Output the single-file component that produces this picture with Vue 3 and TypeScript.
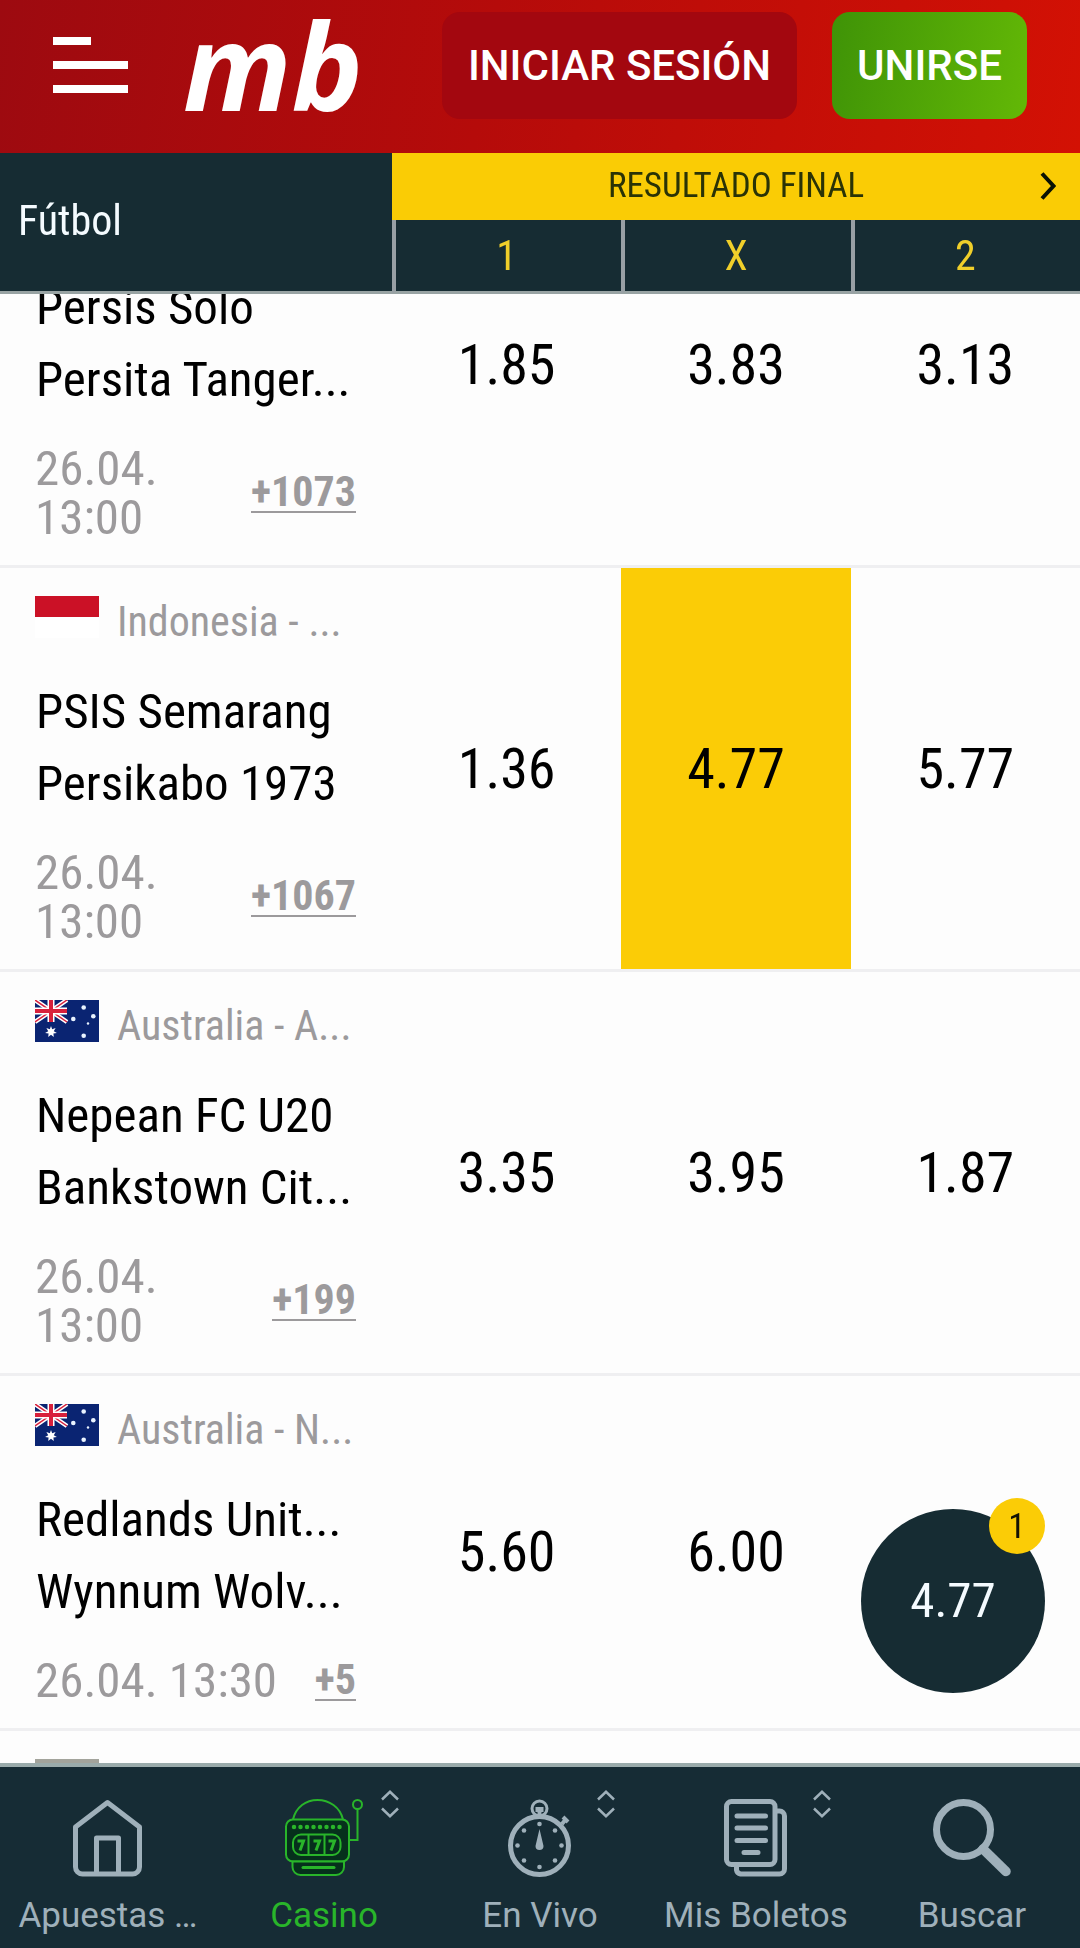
<script setup lang="ts">
import { onMounted, ref } from 'vue'

type Flag = 'id' | 'au' | 'plain'

interface Match {
  id: number
  flag: Flag
  league?: string
  home?: string
  away?: string
  date?: string
  time?: string
  more?: string
  odds: string[]
  selected?: number
}

interface NavItem {
  icon: string
  label: string
  expandable: boolean
}

const columns = ['1', 'X', '2']

const matches: Match[] = [
  { id: 1, flag: 'id', home: 'Persis Solo', away: 'Persita Tanger...', date: '26.04.', time: '13:00', more: '+1073', odds: ['1.85', '3.83', '3.13'] },
  { id: 2, flag: 'id', league: 'Indonesia - ...', home: 'PSIS Semarang', away: 'Persikabo 1973', date: '26.04.', time: '13:00', more: '+1067', odds: ['1.36', '4.77', '5.77'], selected: 1 },
  { id: 3, flag: 'au', league: 'Australia - A...', home: 'Nepean FC U20', away: 'Bankstown Cit...', date: '26.04.', time: '13:00', more: '+199', odds: ['3.35', '3.95', '1.87'] },
  { id: 4, flag: 'au', league: 'Australia - N...', home: 'Redlands Unit...', away: 'Wynnum Wolv...', date: '26.04.', time: '13:30', more: '+5', odds: ['5.60', '6.00', ''] },
  { id: 5, flag: 'plain', odds: ['', '', ''] },
]

const nav: NavItem[] = [
  { icon: 'home', label: 'Apuestas …', expandable: false },
  { icon: 'casino', label: 'Casino', expandable: true },
  { icon: 'live', label: 'En Vivo', expandable: true },
  { icon: 'slips', label: 'Mis Boletos', expandable: true },
  { icon: 'search', label: 'Buscar', expandable: false },
]

const active = ref('casino')
const list = ref<HTMLElement | null>(null)

onMounted(() => {
  if (list.value) list.value.scrollTop = 130
})
</script>

<template>
  <div class="app">
    <header class="topbar">
      <button class="menu" type="button" aria-label="Menú">
        <span class="bar short"></span>
        <span class="bar"></span>
        <span class="bar"></span>
      </button>
      <a class="logo" href="#">mb</a>
      <button class="login" type="button">INICIAR SESIÓN</button>
      <button class="join" type="button">UNIRSE</button>
    </header>

    <main ref="list" class="list">
      <table class="odds">
        <colgroup>
          <col class="col-match" />
          <col v-for="c in columns" :key="c" />
        </colgroup>
        <thead>
          <tr>
            <th class="sport" rowspan="2" scope="col">Fútbol</th>
            <th class="market" colspan="3" scope="colgroup">
              <div class="market-inner">
                <span class="market-name">RESULTADO FINAL</span>
                <button class="next" type="button" aria-label="Siguiente mercado">
                  <svg viewBox="0 0 16 28" width="16" height="28" fill="none" stroke="#0a1204" stroke-width="4"><path d="M2 1.500 13.500 14 2 26.500" /></svg>
                </button>
              </div>
            </th>
          </tr>
          <tr>
            <th v-for="c in columns" :key="c" class="pick" scope="col">{{ c }}</th>
          </tr>
        </thead>
        <tbody>
          <tr v-for="m in matches" :key="m.id">
            <td class="match">
              <div class="league">
                <svg v-if="m.flag === 'au'" class="flag" viewBox="0 0 64 42">
                  <rect width="64" height="42" fill="#0a2472" />
                  <path d="M0 0 32 22M32 0 0 22" stroke="#fff" stroke-width="4.500" />
                  <path d="M0 0 32 22M32 0 0 22" stroke="#d8203c" stroke-width="1.500" />
                  <path d="M16 0V22M0 11H32" stroke="#fff" stroke-width="7" />
                  <path d="M16 0V22M0 11H32" stroke="#d8203c" stroke-width="4" />
                  <path fill="#fff" d="M16 26l1.200 3.300 3.400-1.200-1.800 3.100 3.100 1.700-3.500.6.400 3.500L16 34.800 13.200 37l.4-3.500-3.500-.6 3.100-1.700-1.800-3.100 3.400 1.200z" />
                  <g fill="#e9f3ff">
                    <circle cx="48.700" cy="7.500" r="2.300" />
                    <circle cx="38.300" cy="19" r="2.300" />
                    <circle cx="58.300" cy="16.300" r="2.300" />
                    <circle cx="48.700" cy="35.800" r="2.300" />
                    <circle cx="53" cy="23.500" r="1.200" />
                  </g>
                </svg>
                <svg v-else-if="m.flag === 'id'" class="flag" viewBox="0 0 64 42">
                  <rect width="64" height="42" fill="#fff" />
                  <rect width="64" height="21" fill="#cb1126" />
                </svg>
                <span v-else class="flag plain"></span>
                <span v-if="m.league" class="league-name">{{ m.league }}</span>
              </div>
              <template v-if="m.home">
                <div class="team">{{ m.home }}</div>
                <div class="team">{{ m.away }}</div>
                <div class="meta">
                  <span class="when">{{ m.date }} {{ m.time }}</span>
                  <a class="more" href="#">{{ m.more }}</a>
                </div>
              </template>
            </td>
            <td v-for="(o, i) in m.odds" :key="i" class="cell" :class="{ selected: m.selected === i }">
              <button v-if="o" class="odd" type="button">{{ o }}</button>
            </td>
          </tr>
        </tbody>
      </table>
    </main>

    <button class="slip" type="button">
      4.77
      <span class="badge">1</span>
    </button>

    <nav class="tabs">
      <a v-for="n in nav" :key="n.icon" class="tab" :class="{ active: active === n.icon }" href="#" @click.prevent="active = n.icon">
        <svg v-if="n.icon === 'home'" class="icon" viewBox="0 0 78 78" fill="none" stroke="currentColor" stroke-width="5" stroke-linejoin="round">
          <path d="M38.500 3.500 70.500 28V68a7 7 0 0 1-7 7H13.500a7 7 0 0 1-7-7V28zM27.500 75V39H49.500V75" />
        </svg>
        <svg v-else-if="n.icon === 'casino'" class="icon" viewBox="0 0 78 78" fill="none" stroke="currentColor" stroke-width="2">
          <path d="M8 20.500C11 8 21 1 32.500 1S55 8 58 20.500" />
          <rect x="1" y="20.500" width="63" height="42" rx="7" fill="#06301c" />
          <path d="M7.500 62.500V68a8 8 0 0 0 8 8H51a8 8 0 0 0 8-8v-5.500z" fill="#06301c" />
          <path d="M18 68.500H49" stroke-width="3" stroke-linecap="round" />
          <path d="M9 28H57" stroke-width="4.500" stroke-dasharray="0 6.500" stroke-linecap="round" />
          <rect x="8" y="35.500" width="47.500" height="20.500" rx="8" />
          <path d="M23.500 35.500V56M39.500 35.500V56M64 41H72.500V10" />
          <path d="M12.500 42H18.500L15 51.500M28.500 42H34.500L31 51.500M43.500 42H49.500L46 51.500" stroke-width="3" />
          <circle cx="72.500" cy="5.500" r="4.500" />
        </svg>
        <svg v-else-if="n.icon === 'live'" class="icon" viewBox="0 0 78 78" fill="none" stroke="currentColor">
          <circle cx="38.500" cy="46.500" r="29" stroke-width="5" />
          <circle cx="38.500" cy="9.500" r="7.500" stroke-width="3" />
          <path d="M34.500 8h8v5h-2v5h-4v-5h-2zM38.500 30l4 17a4 4 0 1 1-8 0z" fill="currentColor" stroke="none" />
          <path d="M61 25l4-5M62 18l5 5" stroke-width="4" />
          <g fill="currentColor" stroke="none">
            <circle cx="38.500" cy="25" r="2.300" /><circle cx="54" cy="31.500" r="2.300" /><circle cx="60.500" cy="46.500" r="2.300" /><circle cx="54" cy="61.500" r="2.300" />
            <circle cx="38.500" cy="68" r="2.300" /><circle cx="23" cy="61.500" r="2.300" /><circle cx="16.500" cy="46.500" r="2.300" /><circle cx="23" cy="31.500" r="2.300" />
          </g>
        </svg>
        <svg v-else-if="n.icon === 'slips'" class="icon" viewBox="0 0 78 78" fill="none" stroke="currentColor" stroke-width="5">
          <rect x="9.500" y="2.500" width="48.500" height="63" rx="5" />
          <path d="M58 12H62.500a5 5 0 0 1 5 5V70a5 5 0 0 1-5 5H23.500a5 5 0 0 1-4-4V66" />
          <path d="M20 17H48.500M20 29H48.500M20 41.500H48.500M27 53.500H41" stroke-linecap="round" />
        </svg>
        <svg v-else class="icon" viewBox="0 0 78 78" fill="none" stroke="currentColor">
          <circle cx="30.500" cy="30.500" r="27" stroke-width="7" />
          <path d="M50 50 73 72.500" stroke-width="9.500" stroke-linecap="round" />
        </svg>
        <span class="tab-label">{{ n.label }}</span>
        <svg v-if="n.expandable" class="expand" viewBox="0 0 18 28" fill="none" stroke="#9fb0ba" stroke-width="2.500"><path d="M1 9.500 9 1.800 17 9.500M1 18.500 9 26.200 17 18.500" /></svg>
      </a>
    </nav>
  </div>
</template>

<style>
body {
  background: #fdfdfd;
}
</style>

<style scoped>
.app {
  position: relative;
  display: flex;
  flex-direction: column;
  height: 100vh;
  overflow: hidden;
  font-family: "Roboto Condensed", "Liberation Sans Narrow", Roboto, sans-serif;
  color: #000;
}

button {
  border: 0;
  padding: 0;
  background: none;
  font: inherit;
  color: inherit;
  cursor: pointer;
}

a {
  color: inherit;
  text-decoration: none;
}

.topbar {
  display: flex;
  align-items: flex-start;
  flex: none;
  height: 153px;
  box-sizing: border-box;
  padding: 12px 53px 0;
  background: linear-gradient(100deg, #9d0a10 0%, #b50b0a 45%, #d31104 100%);
  color: #fff;
  font-family: Roboto, sans-serif;
}

.menu {
  display: flex;
  flex-direction: column;
  gap: 16px;
  width: 75px;
  margin-top: 25px;
}

.bar {
  width: 75px;
  height: 8px;
  background: #fff;
}

.bar.short {
  width: 38px;
}

.logo {
  margin-left: 55px;
  font: italic 700 120px/106px "Open Sans", sans-serif;
}

.login,
.join {
  height: 107px;
  border-radius: 18px;
  font-size: 42px;
  font-weight: 500;
}

.login {
  width: 355px;
  margin-left: auto;
  background: #a3070f;
}

.join {
  width: 195px;
  margin-left: 35px;
  background: linear-gradient(100deg, #3f9307, #63b806);
}

.list {
  flex: 1;
  min-height: 0;
  overflow-y: auto;
  scrollbar-width: none;
}

.odds {
  width: 100%;
  table-layout: fixed;
  border-collapse: separate;
  border-spacing: 0;
}

.col-match {
  width: 392px;
}

thead {
  position: sticky;
  top: 0;
  z-index: 1;
}

th {
  padding: 0;
  background: #162c33;
  font-weight: 400;
}

.sport {
  padding: 0 0 4px 18px;
  border-bottom: 3px solid #98a3a3;
  color: #f4fbff;
  font-size: 42px;
  text-align: left;
}

.market {
  height: 67px;
  background: #facc05;
  color: #2a3306;
  font-size: 35px;
}

.market-inner {
  display: flex;
  align-items: center;
  padding: 0 24px 2px 40px;
}

.market-name {
  flex: 1;
}

.next {
  display: flex;
}

.pick {
  height: 71px;
  padding-right: 4px;
  border-left: 4px solid #98a0a5;
  border-bottom: 3px solid #98a3a3;
  color: #f0cf2a;
  font-size: 42px;
}

td {
  padding: 0;
  border-bottom: 3px solid #efeff1;
}

.match {
  padding: 28px 36px 23px 35px;
  vertical-align: top;
}

.league {
  display: flex;
  height: 80px;
  gap: 18px;
}

.flag {
  flex: none;
  width: 64px;
  height: 42px;
}

.flag.plain {
  background: #a3a49c;
}

.league-name {
  color: #9c9a9c;
  font-size: 42px;
  line-height: 52px;
  white-space: nowrap;
}

.team {
  padding-left: 1px;
  font-size: 49px;
  line-height: 72px;
  white-space: nowrap;
}

.team + .meta {
  margin-top: 28px;
}

.meta {
  display: flex;
  align-items: center;
  justify-content: space-between;
  gap: 36px;
  color: #9c9a9c;
  font-size: 49px;
  line-height: 49px;
}

.more {
  flex: none;
  border-bottom: 2px solid #9c9a9c;
  font-size: 42px;
  font-weight: 700;
  line-height: 38px;
}

.cell {
  text-align: center;
}

.cell.selected {
  background: #fbcc06;
}

.odd {
  width: 100%;
  font-size: 56px;
}

.slip {
  position: absolute;
  right: 35px;
  bottom: 255px;
  z-index: 2;
  width: 184px;
  height: 184px;
  padding-bottom: 2px;
  border-radius: 50%;
  background: #162c33;
  color: #f4fbff;
  font-size: 49px;
}

.badge {
  position: absolute;
  top: -11px;
  right: 0;
  width: 56px;
  height: 56px;
  border-radius: 50%;
  background: #fbcc06;
  color: #141204;
  font-size: 35px;
  line-height: 58px;
}

.tabs {
  display: flex;
  flex: none;
  border-top: 4px solid #9aabab;
  background: #162c35;
  font-family: Roboto, sans-serif;
}

.tab {
  position: relative;
  display: flex;
  flex: 1;
  flex-direction: column;
  align-items: center;
  min-width: 0;
  padding: 32px 0 10px;
  color: #9fb0ba;
}

.tab.active {
  color: #29b52a;
}

.icon {
  width: 78px;
  height: 78px;
}

.tab-label {
  margin-top: 17px;
  font-size: 35px;
  line-height: 44px;
  white-space: nowrap;
}

.expand {
  position: absolute;
  top: 23px;
  right: 33px;
  width: 18px;
  height: 28px;
}
</style>
